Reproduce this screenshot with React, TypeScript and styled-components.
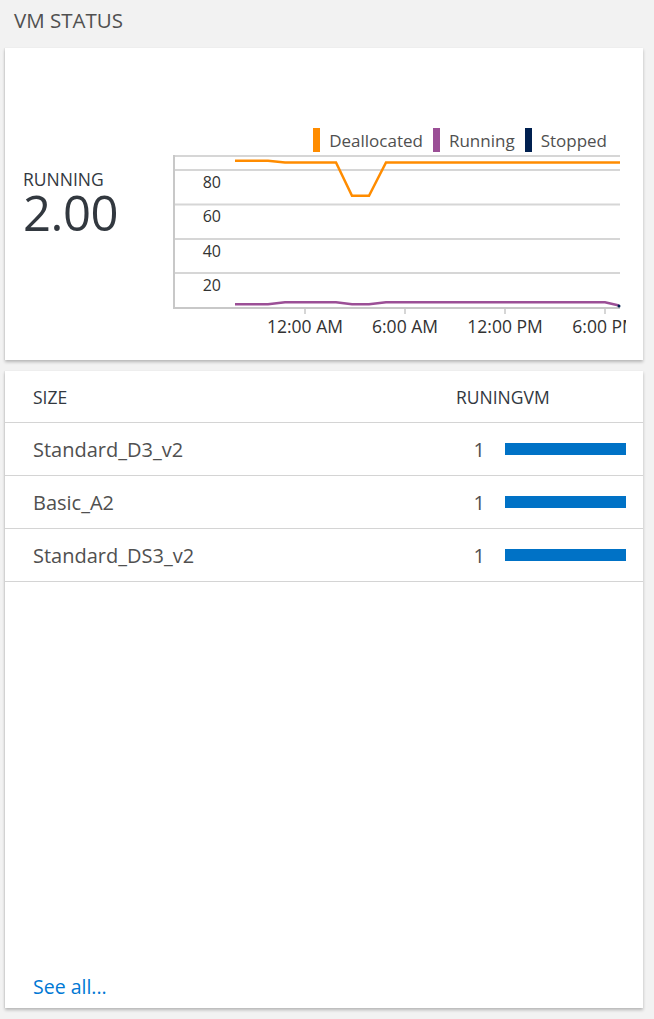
import React from "react";
import styled, { createGlobalStyle } from "styled-components";

const GlobalStyle = createGlobalStyle`
  html, body {
    margin: 0;
    padding: 0;
    background: #f2f2f2;
  }
  body {
    font-family: "Open Sans", "Noto Sans", sans-serif;
  }
`;

const Page = styled.div`
  box-sizing: border-box;
  height: 1019px;
  padding: 0 11px 0 5px;
  background: #f2f2f2;
`;

const Title = styled.h2`
  margin: 0;
  padding: 7px 0 0 9px;
  height: 40px;
  box-sizing: border-box;
  font-size: 20.5px;
  font-weight: 400;
  color: #505050;
  line-height: 26px;
`;

const Card = styled.div`
  background: #fff;
  box-shadow: 0 2px 3px rgba(0, 0, 0, 0.25), -1px 0 1px rgba(0, 0, 0, 0.04);
`;

const ChartCard = styled(Card)`
  margin-top: 8px;
  height: 312px;
  display: grid;
  grid-template-columns: 150px 453px;
  padding-left: 18px;
`;

const Kpi = styled.div`
  align-self: center;
  display: flex;
  flex-direction: column;
  padding-bottom: 6px;
  color: #32383f;
`;

const KpiLabel = styled.div`
  font-size: 17.5px;
  line-height: 20px;
  margin-bottom: 2px;
  text-transform: uppercase;
`;

const KpiValue = styled.div`
  font-size: 49px;
  line-height: 42px;
  letter-spacing: -0.5px;
`;

const ChartColumn = styled.div`
  padding-top: 80px;
  display: flex;
  flex-direction: column;
`;

const Legend = styled.div`
  display: flex;
  justify-content: flex-end;
  gap: 10px;
  padding-right: 19px;
  height: 24px;
`;

const LegendItem = styled.div`
  display: flex;
  align-items: center;
  gap: 9px;
  font-size: 17px;
  color: #505050;
`;

const Swatch = styled.span<{ $color: string }>`
  width: 7px;
  height: 24px;
  background: ${(p) => p.$color};
`;

const TableCard = styled(Card)`
  margin-top: 11px;
  height: 637px;
  display: flex;
  flex-direction: column;
`;

const Row = styled.div<{ $head?: boolean }>`
  display: grid;
  grid-template-columns: 1fr 29px 121px;
  column-gap: 20px;
  align-items: center;
  height: ${(p) => (p.$head ? "51px" : "52px")};
  padding: 0 17px 0 28px;
  border-bottom: 1px solid #d4d4d4;
  color: ${(p) => (p.$head ? "#32383f" : "#505050")};
  font-size: ${(p) => (p.$head ? "17.5px" : "20px")};
`;

const HeadRight = styled.div`
  grid-column: 2 / 4;
`;

const Value = styled.div`
  text-align: right;
`;

const Bar = styled.div`
  height: 12px;
  background: #0072c6;
`;

const Footer = styled.div`
  margin-top: auto;
  padding: 0 0 8px 28px;
`;

const SeeAll = styled.a`
  color: #0078d4;
  font-size: 19.5px;
  text-decoration: none;
  cursor: pointer;
`;

const sizes = [
  { name: "Standard_D3_v2", count: 1 },
  { name: "Basic_A2", count: 1 },
  { name: "Standard_DS3_v2", count: 1 },
];

const legend = [
  { label: "Deallocated", color: "#ff8c00" },
  { label: "Running", color: "#9b4f96" },
  { label: "Stopped", color: "#002050" },
];

const grid = [18, 52.5, 87, 121];
const yLabels = ["80", "60", "40", "20"];
const ticks = [
  { x: 132, label: "12:00 AM" },
  { x: 232, label: "6:00 AM" },
  { x: 332, label: "12:00 PM" },
  { x: 432, label: "6:00 PM" },
];

function Chart() {
  return (
    <svg width="453" height="185" style={{ display: "block", overflow: "hidden" }}>
      <line x1="0" y1="4" x2="447" y2="4" stroke="#d6d6d6" strokeWidth="2" />
      {grid.map((y) => (
        <line key={y} x1="0" y1={y} x2="447" y2={y} stroke="#d6d6d6" strokeWidth="2" />
      ))}
      <line x1="0" y1="156" x2="447" y2="156" stroke="#c8c8c8" strokeWidth="2" />
      <line x1="1" y1="3" x2="1" y2="157" stroke="#c8c8c8" strokeWidth="2" />
      {yLabels.map((l, i) => (
        <text
          key={l}
          x="48"
          y={grid[i] + 17.5}
          textAnchor="end"
          fontSize="16"
          fill="#323232"
          fontFamily="Open Sans, sans-serif"
        >
          {l}
        </text>
      ))}
      {ticks.map((t) => (
        <g key={t.label}>
          <line x1={t.x} y1="156" x2={t.x} y2="162" stroke="#c8c8c8" strokeWidth="1.5" />
          <text
            x={t.x}
            y="180.5"
            textAnchor="middle"
            fontSize="17.5"
            fill="#323232"
            fontFamily="Open Sans, sans-serif"
          >
            {t.label}
          </text>
        </g>
      ))}
      <polyline
        points="62,8.7 95,8.7 112,10.5 163,10.5 179,43.7 196,43.7 213,10.5 447,10.5"
        fill="none"
        stroke="#ff8c00"
        strokeWidth="2.5"
      />
      <polyline
        points="62,152.3 95,152.3 112,150.3 163,150.3 179,152.3 196,152.3 213,150.3 432,150.3 446,153.5"
        fill="none"
        stroke="#9b4f96"
        strokeWidth="2.5"
      />
      <circle cx="446" cy="154" r="1.5" fill="#002050" />
    </svg>
  );
}

export default function App() {
  return (
    <Page>
      <GlobalStyle />
      <Title>VM STATUS</Title>
      <ChartCard>
        <Kpi>
          <KpiLabel>Running</KpiLabel>
          <KpiValue>2.00</KpiValue>
        </Kpi>
        <ChartColumn>
          <Legend>
            {legend.map((l) => (
              <LegendItem key={l.label}>
                <Swatch $color={l.color} />
                {l.label}
              </LegendItem>
            ))}
          </Legend>
          <Chart />
        </ChartColumn>
      </ChartCard>
      <TableCard>
        <Row $head>
          <div>SIZE</div>
          <HeadRight>RUNINGVM</HeadRight>
        </Row>
        {sizes.map((s) => (
          <Row key={s.name}>
            <div>{s.name}</div>
            <Value>{s.count}</Value>
            <Bar />
          </Row>
        ))}
        <Footer>
          <SeeAll>See all...</SeeAll>
        </Footer>
      </TableCard>
    </Page>
  );
}
